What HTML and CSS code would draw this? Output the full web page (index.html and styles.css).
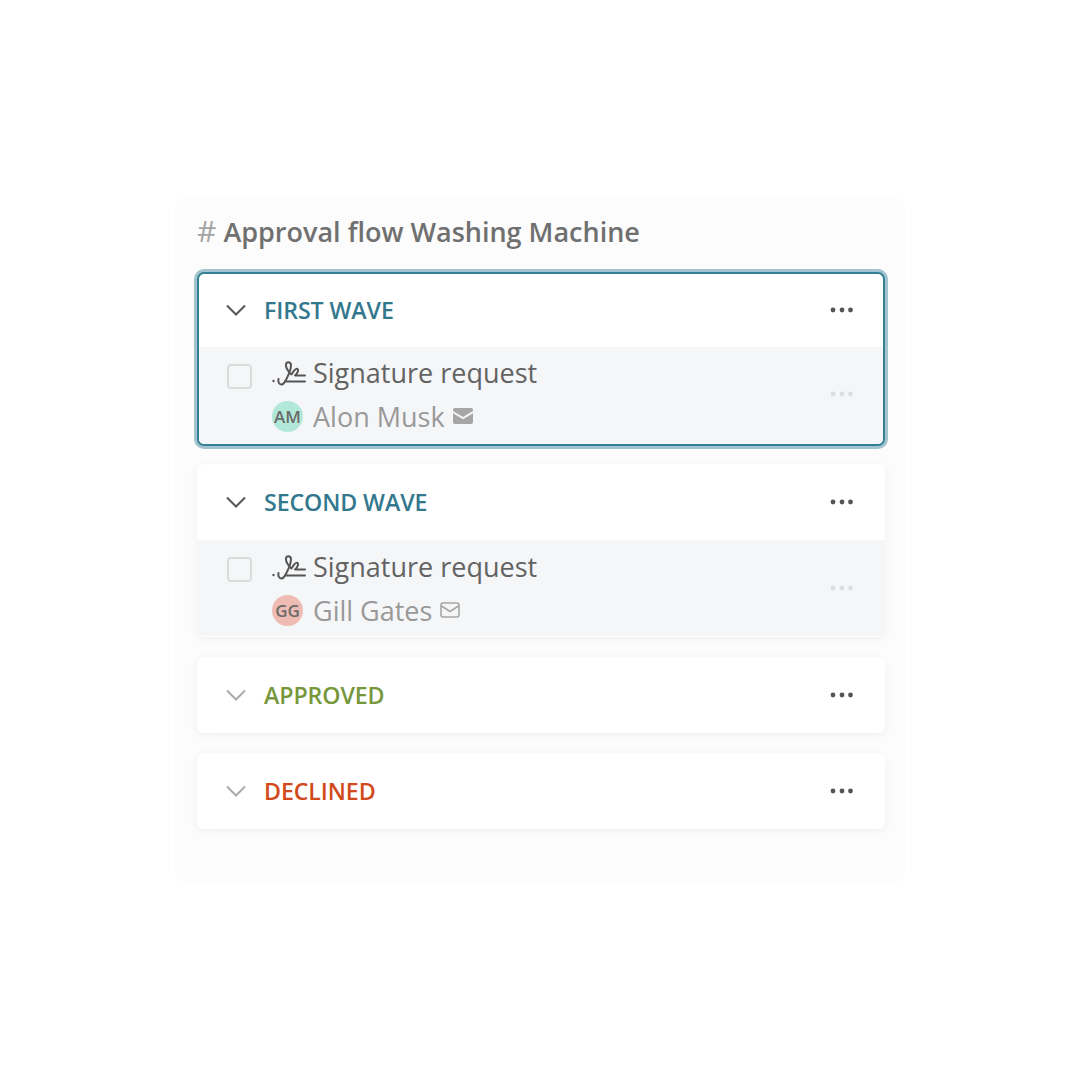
FILE: index.html
```html
<!DOCTYPE html>
<html lang="en">
<head>
    <meta charset="UTF-8">
    <meta name="viewport" content="width=device-width, initial-scale=1.0">
    <title>Approval flow</title>
    <link rel="stylesheet" href="styles.css">
</head>
<body>
    <svg class="sprites" width="0" height="0">
        <symbol id="chevron" viewBox="0 0 20 12">
            <path d="M1 1.5 L10 10.5 L19 1.5" fill="none" stroke="currentColor" stroke-width="2"/>
        </symbol>
        <symbol id="dots" viewBox="0 0 24 6">
            <circle cx="3" cy="3" r="2.4" fill="currentColor"/>
            <circle cx="12" cy="3" r="2.4" fill="currentColor"/>
            <circle cx="20.5" cy="3" r="2.4" fill="currentColor"/>
        </symbol>
        <symbol id="signature" viewBox="0 0 36 26">
            <circle cx="1.500" cy="21" r="1.200" fill="currentColor"/>
            <path d="M6.500 19C5.500 24 9.500 26 12 23C15 19 19 10 19 5.500C19 1.500 14.500 1 14 4.500C13.500 8 17 12.500 19.500 14.500C21 12 23.500 8 25.500 9C27 10 25 14 23 15.500" fill="none" stroke="currentColor" stroke-width="2" stroke-linecap="round" stroke-linejoin="round"/>
            <path d="M13 21.500H33M24 15.500H33" fill="none" stroke="currentColor" stroke-width="2" stroke-linecap="round"/>
        </symbol>
    </svg>

    <main class="board">
        <h1 class="board-title"><span class="hash">#</span> Approval flow Washing Machine</h1>

        <section class="card card-active">
            <header class="card-head">
                <svg class="chevron"><use href="#chevron"/></svg>
                <span class="card-name teal">FIRST WAVE</span>
                <svg class="dots"><use href="#dots"/></svg>
            </header>
            <div class="task">
                <span class="checkbox"></span>
                <div class="task-info">
                    <div class="task-title">
                        <svg class="sig"><use href="#signature"/></svg>
                        <span>Signature request</span>
                    </div>
                    <div class="task-person">
                        <span class="avatar avatar-green">AM</span>
                        <span>Alon Musk</span>
                        <svg class="mail" viewBox="0 0 20 16">
                            <path d="M2 0h16a2 2 0 0 1 2 2v1l-10 6L0 3V2a2 2 0 0 1 2-2z" fill="currentColor"/>
                            <path d="M0 5.300l10 6 10-6V14a2 2 0 0 1-2 2H2a2 2 0 0 1-2-2z" fill="currentColor"/>
                        </svg>
                    </div>
                </div>
                <svg class="dots dots-faint"><use href="#dots"/></svg>
            </div>
        </section>

        <section class="card">
            <header class="card-head">
                <svg class="chevron"><use href="#chevron"/></svg>
                <span class="card-name teal">SECOND WAVE</span>
                <svg class="dots"><use href="#dots"/></svg>
            </header>
            <div class="task">
                <span class="checkbox"></span>
                <div class="task-info">
                    <div class="task-title">
                        <svg class="sig"><use href="#signature"/></svg>
                        <span>Signature request</span>
                    </div>
                    <div class="task-person">
                        <span class="avatar avatar-red">GG</span>
                        <span>Gill Gates</span>
                        <svg class="mail" viewBox="0 0 20 16">
                            <rect x="1" y="1" width="18" height="14" rx="2" fill="none" stroke="currentColor" stroke-width="1.600"/>
                            <path d="M1.500 4l8.500 5.500L18.500 4" fill="none" stroke="currentColor" stroke-width="1.600"/>
                        </svg>
                    </div>
                </div>
                <svg class="dots dots-faint"><use href="#dots"/></svg>
            </div>
        </section>

        <section class="card">
            <header class="card-head">
                <svg class="chevron chevron-light"><use href="#chevron"/></svg>
                <span class="card-name green">APPROVED</span>
                <svg class="dots"><use href="#dots"/></svg>
            </header>
        </section>

        <section class="card">
            <header class="card-head">
                <svg class="chevron chevron-light"><use href="#chevron"/></svg>
                <span class="card-name red">DECLINED</span>
                <svg class="dots"><use href="#dots"/></svg>
            </header>
        </section>
    </main>
</body>
</html>
```

FILE: styles.css
```css
body {
    margin: 0;
    height: 1080px;
    background-color: #fff;
    font-family: "Open Sans", "Noto Sans", sans-serif;
    display: flex;
    justify-content: center;
    align-items: flex-start;
}

.sprites {
    display: none;
}

.board {
    box-sizing: border-box;
    width: 730px;
    height: 686px;
    margin-top: 197px;
    padding: 17px 20px 0 22px;
    background-color: #fcfcfc;
    border-radius: 12px;
    display: flex;
    flex-direction: column;
}

.board-title {
    margin: 0 0 22px;
    font-size: 27px;
    line-height: 36px;
    font-weight: 600;
    color: #707070;
}

.hash {
    font-size: 30px;
    line-height: 1;
    font-weight: 400;
    color: #a3a3a3;
}

.card {
    background-color: #fff;
    border-radius: 7px;
    margin-bottom: 20px;
    box-shadow: 0 2px 10px rgba(0, 0, 0, 0.05);
    overflow: hidden;
}

.card-active {
    border: 2px solid #357f94;
    margin-bottom: 18px;
    overflow: visible;
    box-shadow: 0 0 0 3px #a3c3ce;
}

.card-head {
    box-sizing: border-box;
    height: 76px;
    padding: 0 31px 0 29px;
    display: flex;
    align-items: center;
}

.card-active .card-head {
    height: 73px;
    padding: 0 29px 2px 27px;
}

.chevron {
    width: 20px;
    height: 12px;
    color: #555;
    flex-shrink: 0;
}

.chevron-light {
    color: #aaa;
}

.card-name {
    margin-left: 18px;
    flex: 1;
    font-size: 23.2px;
    font-weight: 600;
    letter-spacing: -0.1px;
}

.teal {
    color: #33788d;
}

.green {
    color: #76973a;
}

.red {
    color: #d24a1c;
}

.dots {
    width: 24px;
    height: 6px;
    color: #555;
    flex-shrink: 0;
}

.dots-faint {
    color: #dcdde1;
}

.task {
    box-sizing: border-box;
    height: 97px;
    padding: 0 31px 0 30px;
    background-color: #f5f6f8;
    border-bottom: 1px solid #fff;
    display: flex;
    align-items: center;
}

.card-active .task {
    padding: 0 29px 3px 28px;
    border-bottom: none;
    border-radius: 0 0 5px 5px;
}

.checkbox {
    box-sizing: border-box;
    width: 25px;
    height: 25px;
    margin-top: 17px;
    border: 2px solid #dadcdc;
    border-radius: 4px;
    flex-shrink: 0;
    align-self: flex-start;
}

.task-info {
    flex: 1;
    margin-left: 20px;
}

.task-title {
    display: flex;
    align-items: center;
    font-size: 27px;
    line-height: 44px;
    color: #636363;
}

.sig {
    width: 36px;
    height: 26px;
    margin-right: 5px;
    color: #555;
}

.task-person {
    display: flex;
    align-items: center;
    font-size: 27px;
    line-height: 43px;
    color: #999;
}

.avatar {
    width: 31px;
    height: 31px;
    margin-right: 10px;
    border-radius: 50%;
    display: flex;
    align-items: center;
    justify-content: center;
    font-size: 17px;
    font-weight: 600;
    color: #6b6b6b;
}

.avatar-green {
    background-color: #b2e8d8;
}

.avatar-red {
    background-color: #efbcb4;
}

.mail {
    width: 20px;
    height: 16px;
    margin-left: 8px;
    color: #a6a6a6;
}
```
